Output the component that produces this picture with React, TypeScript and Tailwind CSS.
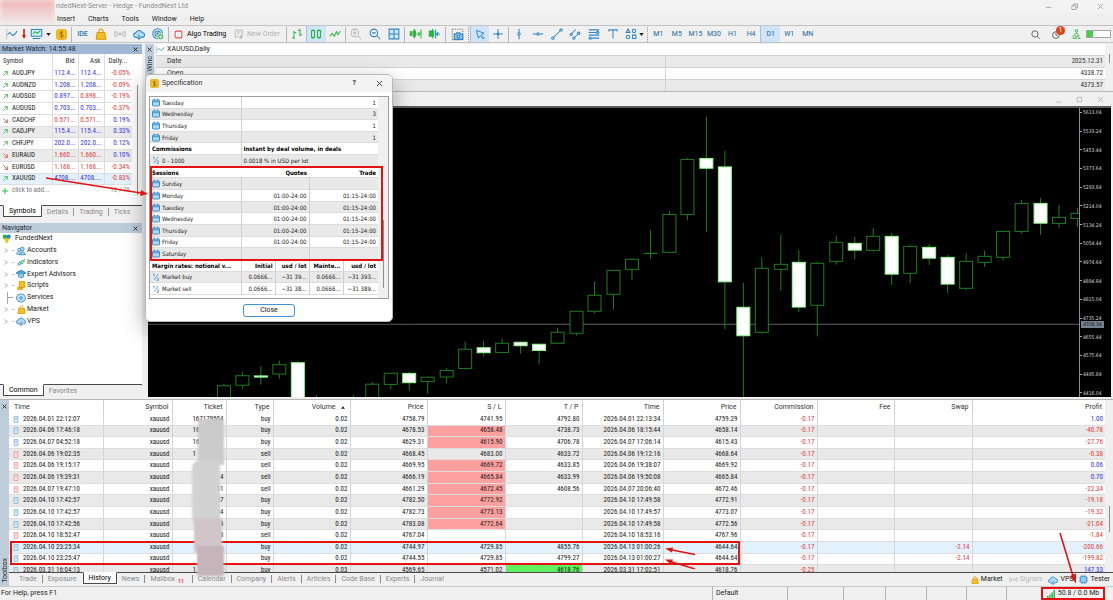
import clsx from "clsx";
import type { ReactNode } from "react";

type Tone = "blue" | "red";

const BLUE = "#2f86c4";
const GREEN = "#2fb344";
const GOLD = "#f5bd1f";

const quotes: {
  symbol: string;
  up: boolean;
  bid: string;
  bidTone: Tone;
  ask: string;
  askTone: Tone;
  daily: string;
  bg?: string;
}[] = [
  { symbol: "AUDJPY", up: true, bid: "112.4...", bidTone: "blue", ask: "112.4...", askTone: "blue", daily: "-0.05%" },
  { symbol: "AUDNZD", up: true, bid: "1.208...", bidTone: "blue", ask: "1.208...", askTone: "blue", daily: "-0.09%" },
  { symbol: "AUDSGD", up: true, bid: "0.897...", bidTone: "blue", ask: "0.898...", askTone: "red", daily: "-0.19%" },
  { symbol: "AUDUSD", up: true, bid: "0.703...", bidTone: "blue", ask: "0.703...", askTone: "blue", daily: "-0.37%" },
  { symbol: "CADCHF", up: false, bid: "0.571...", bidTone: "red", ask: "0.571...", askTone: "red", daily: "0.19%" },
  { symbol: "CADJPY", up: true, bid: "115.4...", bidTone: "blue", ask: "115.4...", askTone: "blue", daily: "0.33%", bg: "bg-[#ebebeb]" },
  { symbol: "CHFJPY", up: true, bid: "202.0...", bidTone: "blue", ask: "202.0...", askTone: "blue", daily: "0.12%" },
  { symbol: "EURAUD", up: false, bid: "1.660...", bidTone: "red", ask: "1.660...", askTone: "red", daily: "0.10%", bg: "bg-[#ebebeb]" },
  { symbol: "EURUSD", up: false, bid: "1.168...", bidTone: "red", ask: "1.168...", askTone: "red", daily: "-0.34%" },
  { symbol: "XAUUSD", up: true, bid: "4708....", bidTone: "blue", ask: "4708....", askTone: "blue", daily: "-0.83%", bg: "bg-[#e3f1fd]" },
];

const history: {
  time: string;
  ticket: string;
  type: string;
  volume: string;
  price: string;
  sl: string;
  slHit?: boolean;
  tp: string;
  tpHit?: boolean;
  closeTime: string;
  closePrice: string;
  commission: string;
  swap?: string;
  profit: string;
  selected?: boolean;
}[] = [
  { time: "2026.04.01 22:12:07", ticket: "167179504", type: "buy", volume: "0.02", price: "4758.79", sl: "4741.95", tp: "4792.80", closeTime: "2026.04.01 22:13:34", closePrice: "4759.29", commission: "-0.17", profit: "1.00" },
  { time: "2026.04.06 17:46:18", ticket: "16", type: "buy", volume: "0.02", price: "4678.53", sl: "4658.48", slHit: true, tp: "4738.73", closeTime: "2026.04.06 18:15:44", closePrice: "4658.14", commission: "-0.17", profit: "-40.78" },
  { time: "2026.04.07 04:52:18", ticket: "16", type: "buy", volume: "0.02", price: "4629.31", sl: "4615.90", slHit: true, tp: "4706.78", closeTime: "2026.04.07 17:06:14", closePrice: "4615.43", commission: "-0.17", profit: "-27.76" },
  { time: "2026.04.06 19:02:35", ticket: "1", type: "sell", volume: "0.02", price: "4668.45", sl: "4683.00", tp: "4633.72", closeTime: "2026.04.06 19:12:16", closePrice: "4668.64", commission: "-0.17", profit: "-0.38" },
  { time: "2026.04.06 19:15:17", ticket: "", type: "sell", volume: "0.02", price: "4669.95", sl: "4669.72", slHit: true, tp: "4633.85", closeTime: "2026.04.06 19:38:07", closePrice: "4669.92", commission: "-0.17", profit: "0.06" },
  { time: "2026.04.06 19:39:31", ticket: "4", type: "sell", volume: "0.02", price: "4666.19", sl: "4665.84", slHit: true, tp: "4633.99", closeTime: "2026.04.06 19:50:08", closePrice: "4665.84", commission: "-0.17", profit: "0.70" },
  { time: "2026.04.07 19:47:10", ticket: "41", type: "sell", volume: "0.02", price: "4661.29", sl: "4672.45", slHit: true, tp: "4608.56", closeTime: "2026.04.07 20:06:40", closePrice: "4672.46", commission: "-0.17", profit: "-22.34" },
  { time: "2026.04.10 17:42:57", ticket: "37", type: "buy", volume: "0.02", price: "4782.50", sl: "4772.92", slHit: true, tp: "", closeTime: "2026.04.10 17:49:58", closePrice: "4772.91", commission: "-0.17", profit: "-19.18" },
  { time: "2026.04.10 17:42:57", ticket: "34", type: "buy", volume: "0.02", price: "4782.73", sl: "4773.13", slHit: true, tp: "", closeTime: "2026.04.10 17:49:57", closePrice: "4773.07", commission: "-0.17", profit: "-19.32" },
  { time: "2026.04.10 17:42:56", ticket: "4", type: "buy", volume: "0.02", price: "4783.08", sl: "4772.64", slHit: true, tp: "", closeTime: "2026.04.10 17:49:58", closePrice: "4772.56", commission: "-0.17", profit: "-21.04" },
  { time: "2026.04.10 18:52:47", ticket: "8", type: "sell", volume: "0.02", price: "4767.04", sl: "", tp: "", closeTime: "2026.04.10 18:53:16", closePrice: "4767.96", commission: "-0.17", profit: "-1.84" },
  { time: "2026.04.10 23:25:34", ticket: "", type: "buy", volume: "0.02", price: "4744.97", sl: "4729.85", tp: "4855.76", closeTime: "2026.04.13 01:00:26", closePrice: "4644.64", commission: "-0.17", swap: "-2.14", profit: "-200.66", selected: true },
  { time: "2026.04.10 23:25:47", ticket: "", type: "buy", volume: "0.02", price: "4744.55", sl: "4729.85", tp: "4799.27", closeTime: "2026.04.13 01:00:27", closePrice: "4644.64", commission: "-0.17", swap: "-2.14", profit: "-199.82" },
  { time: "2026.03.31 16:04:13", ticket: "1", type: "buy", volume: "0.03", price: "4569.65", sl: "4571.02", tp: "4618.76", tpHit: true, closeTime: "2026.03.31 17:02:51", closePrice: "4618.76", commission: "-0.25", profit: "147.33" },
];

// x, high, body top, body bottom, low, bearish
const candles: [number, number, number, number, number, boolean][] = [
  [76, 276, 278, 300, 300, false],
  [94.5, 264, 268, 277.5, 281, false],
  [113, 258.5, 268.2, 269.4, 277, true],
  [131.5, 253, 257, 266.3, 271, false],
  [150, 253, 255, 300, 300, true],
  [168.5, 287, 300, 302, 302, false],
  [205.5, 287, 300, 302, 302, false],
  [224.5, 274.5, 276.5, 300, 300, false],
  [243, 265, 265.5, 276.7, 281.7, false],
  [261.5, 264, 265.7, 275, 282.7, true],
  [280, 269, 269.5, 273.7, 286, false],
  [299, 260, 262.7, 269.3, 275.7, false],
  [317.5, 234, 241.5, 260.7, 262, false],
  [336, 233, 240, 245, 248.7, true],
  [354.5, 231, 235.5, 244.7, 245, false],
  [373, 234, 234.5, 238, 246, true],
  [391.5, 236, 236.5, 242.7, 256.7, true],
  [410, 220, 224.5, 235.5, 236, false],
  [429, 203, 203.5, 225.5, 227.7, false],
  [447, 174, 187.5, 203.5, 205.7, false],
  [466, 162, 162.5, 186.5, 201.7, false],
  [484.5, 150.7, 151.5, 161.5, 172, false],
  [503, 122, 145.4, 145.6, 150.7, false],
  [522, 103.3, 106.5, 144.5, 145.5, false],
  [540, 50, 51.5, 106.5, 112, false],
  [559, 8.7, 50.5, 60.3, 124, true],
  [577.5, 43, 59, 174, 221.3, true],
  [596, 175, 199.5, 228, 289, true],
  [614.5, 149.3, 160.5, 224.5, 226.3, false],
  [633.5, 126.7, 156.5, 161.5, 182.7, false],
  [651.5, 142.3, 154.5, 199.3, 204.3, true],
  [670, 154, 155.5, 197.5, 228.7, false],
  [689, 128, 134.5, 153.5, 156.7, false],
  [707.5, 129, 135.5, 142.3, 151.7, true],
  [726, 120, 128.5, 142.5, 144, false],
  [744.5, 125, 128.5, 166.3, 177, true],
  [763, 137, 138.5, 165.5, 175.3, false],
  [782, 136.3, 139.5, 150.3, 157, true],
  [800.5, 147.3, 149.5, 176.3, 185.3, true],
  [819, 145.3, 153.5, 180.5, 182.5, false],
  [837.5, 143, 148.5, 154.5, 159, false],
  [856, 123, 123.5, 149.5, 153, false],
  [874.5, 92, 95.5, 123.5, 125.7, false],
  [893.5, 90, 95.5, 115.3, 127, true],
  [912, 97, 109.5, 115.5, 120, false],
  [930.5, 99.7, 105.5, 110.5, 119, false],
];

const scale = Array.from({ length: 16 }, (_, i) => (5613.04 - i * 79.8).toFixed(2));

const Icon = ({
  children,
  className,
  color = BLUE,
}: {
  children: ReactNode;
  className?: string;
  color?: string;
}) => (
  <svg
    viewBox="0 0 16 16"
    className={clsx("shrink-0", className || "w-3 h-3")}
    fill="none"
    stroke={color}
    strokeWidth="1.4"
    aria-hidden="true"
  >
    {children}
  </svg>
);

const LineChartIcon = ({ className }: { className?: string }) => (
  <Icon className={className}>
    <path d="M1 15V1" stroke="#c4c4c4" />
    <path d="M2 9l3-3 4 4 3-2 3-4" />
  </Icon>
);

const BagIcon = ({ className }: { className?: string }) => (
  <Icon className={className} color="#d99a00">
    <path d="M5.3 6V4a2.7 2.7 0 0 1 5.4 0v2" />
    <path d="M3 6h10l1.3 9H1.7z" fill={GOLD} />
  </Icon>
);

const CloudIcon = ({ className }: { className?: string }) => (
  <Icon className={className}>
    <path
      d="M4 12.5a3 3 0 0 1-.2-6A4.3 4.3 0 0 1 12 6a3.2 3.2 0 0 1 .2 6.5h-2.4M6.3 12.5H4"
      fill="#b5dcf7"
    />
    <path d="M8 9v6M6 13l2 2 2-2" />
  </Icon>
);

const SignalIcon = ({ className }: { className?: string }) => (
  <Icon className={className} color="#b9b9b9">
    <circle cx="8" cy="8" r="1.3" />
    <path d="M5 5.3a4 4 0 0 0 0 5.4M11 5.3a4 4 0 0 1 0 5.4M2.6 3.6a7 7 0 0 0 0 8.8M13.4 3.6a7 7 0 0 1 0 8.8" />
  </Icon>
);

const CoinIcon = ({ className }: { className?: string }) => (
  <Icon className={className} color="#c98f00">
    <rect x="1" y="1" width="14" height="14" rx="2.5" fill={GOLD} stroke="#e5a900" />
    <path d="M10.5 5.2C9.5 4.2 5.6 4 5.6 6.2c0 2.3 5 1.3 5 3.6 0 2.2-4 2-5.2.9M8 3v10" stroke="#8a6200" strokeWidth="1.2" />
  </Icon>
);

const CalendarIcon = () => (
  <Icon className="w-[8px] h-[9px]">
    <rect x="1" y="3" width="14" height="12" rx="1" fill="#a9dcf9" strokeWidth="1.8" />
    <path d="M1 6.5h14M4.5 0v4M11.5 0v4" strokeWidth="1.8" />
  </Icon>
);

const HalfIcon = () => (
  <Icon className="w-[8px] h-[8px]">
    <path d="M2 3l2-1.5V7M4 14L12 2M9.5 10.5c1-2 4-1.3 4 .3 0 1.5-2.5 1.7-4 3.7h4.5" />
  </Icon>
);

const Caret = () => (
  <svg viewBox="0 0 6 4" className="w-[5px] h-[3px]" fill="#222" aria-hidden="true">
    <path d="M0 0h6L3 4z" />
  </svg>
);

const CloseX = () => (
  <svg viewBox="0 0 8 8" className="w-[5px] h-[5px]" stroke="#222" strokeWidth="1.5" aria-hidden="true">
    <path d="M1 1l6 6M7 1L1 7" />
  </svg>
);

const Sep = ({ dotted }: { dotted?: boolean }) => (
  <div className={clsx("h-[15px] mx-px border-l", dotted ? "border-dotted border-[#999]" : "border-[#b5b5b5]")} />
);

const Tool = ({
  label,
  active,
  children,
  className,
}: {
  label: string;
  active?: boolean;
  children: ReactNode;
  className?: string;
}) => (
  <button
    type="button"
    aria-label={label}
    className={clsx(
      "h-[16px] flex items-center justify-center",
      className || "flex-1",
      active && "bg-[#cfe4f7] border-l border-[#a9bfd3]",
    )}
  >
    {children}
  </button>
);

const Toolbar = () => (
  <div className="h-[18px] flex items-center pl-1 pr-[2px] border-y border-[#c3c3c3] bg-[#f0f0f0]">
    <Tool label="New chart" className="w-6 gap-1">
      <LineChartIcon />
      <svg viewBox="0 0 4 10" className="w-1 h-[10px]" fill="#e01515" aria-hidden="true">
        <path d="M1.2 0h1.6v6H4L2 10 0 6h1.2z" />
      </svg>
    </Tool>
    <Tool label="Profiles" className="w-6 gap-[3px]">
      <Icon className="w-[13px] h-[12px]">
        <path d="M1 2h14v9H1zM3 14h10" fill="#d6ecfa" />
        <path d="M3 8l3-3 3 2 4-3" stroke={GREEN} />
      </Icon>
      <Caret />
    </Tool>
    <Tool label="Market watch" className="w-[18px]">
      <CoinIcon className="w-[11px] h-[11px]" />
    </Tool>
    <Sep />
    <div className="w-[94px] flex">
      <Tool label="MetaEditor">
        <span className="font-semibold text-[#2f7fbd]">IDE</span>
      </Tool>
      <Tool label="Market">
        <BagIcon />
      </Tool>
      <Tool label="Signals">
        <SignalIcon />
      </Tool>
      <Tool label="VPS">
        <CloudIcon />
      </Tool>
      <Tool label="Copy">
        <Icon>
          <circle cx="7.5" cy="7.5" r="6.5" />
          <circle cx="7.5" cy="7.5" r="3.6" />
          <circle cx="7.5" cy="7.5" r="1" />
          <circle cx="11.5" cy="11.5" r="4" fill={GREEN} stroke="#fff" strokeWidth="1" />
          <path d="M11.5 9.5v4M9.5 11.5h4" stroke="#fff" />
        </Icon>
      </Tool>
    </div>
    <Sep />
    <button type="button" className="w-[59px] flex items-center gap-1 pl-1">
      <Icon className="w-[9px] h-[9px]" color="#e0524e">
        <rect x="2" y="2" width="12" height="12" rx="2" strokeWidth="1.8" />
      </Icon>
      Algo Trading
    </button>
    <button type="button" className="w-[56px] flex items-center gap-[3px] pl-[5px] text-[#b2b2b2]">
      <Icon className="w-[10px] h-[11px]" color="#b5b5b5">
        <path d="M2 1h11v9M2 1v11h5M5 4h5M5 7h3" />
        <path d="M11 9v6M8 12h6" strokeWidth="2" />
      </Icon>
      New Order
    </button>
    <Sep />
    <div className="w-[56px] flex">
      <Tool label="Bar chart">
        <Icon color={GREEN}>
          <path d="M4 4v11M1.5 13H4M4 6h3M12 1v10M9 3h3M12 9h3" />
        </Icon>
      </Tool>
      <Tool label="Candlesticks" active>
        <Icon color={GREEN}>
          <path d="M2 3.5h4v9H2zM4 1.5v2M4 12.5v2M10 3.5h4v9h-4zM12 1.5v2M12 12.5v2" />
        </Icon>
      </Tool>
      <Tool label="Line chart">
        <Icon color={GREEN}>
          <path d="M1 11l3-4 3 4 3-6 2 4 3-5" />
        </Icon>
      </Tool>
    </div>
    <Sep />
    <div className="w-[56px] flex">
      <Tool label="Zoom in">
        <Icon color="#bdbdbd">
          <circle cx="6.5" cy="6.5" r="5" />
          <path d="M10 10l5 5M4 6.5h5M6.5 4v5" />
        </Icon>
      </Tool>
      <Tool label="Zoom out">
        <Icon>
          <circle cx="6.5" cy="6.5" r="5" />
          <path d="M10 10l5 5M4 6.5h5" />
        </Icon>
      </Tool>
      <Tool label="Tile windows">
        <Icon>
          <path d="M1.5 1.5h13v13h-13z" fill="#cfe8f9" />
          <path d="M8 1.5v13M1.5 8h13" />
        </Icon>
      </Tool>
    </div>
    <Sep />
    <div className="w-[38px] flex">
      <Tool label="Auto scroll">
        <Icon className="w-[13px] h-[12px]" color={GREEN}>
          <path d="M1 5h2v5H1zM5 4h3v7H5z" fill={GREEN} />
          <path d="M6.5 1v13M9 8h4M11.5 5.5L14 8l-2.5 2.5M15.3 2v12" />
        </Icon>
      </Tool>
      <Tool label="Chart shift">
        <Icon className="w-[13px] h-[12px]" color={GREEN}>
          <path d="M1 4h2v7H1zM4 4h3v7H4z" fill={GREEN} />
          <path d="M5.5 1v13" />
          <path d="M9.5 2v12M15 8h-4M13 5.5L10.5 8l2.5 2.5" stroke={BLUE} />
        </Icon>
      </Tool>
    </div>
    <Sep />
    <Tool label="Screenshot" className="w-5">
      <Icon className="w-[13px] h-[13px]">
        <path d="M1.5 1.5h13v13h-13z" stroke="#555" strokeDasharray="1.5 1.5" strokeWidth="1" />
        <path d="M4 7.5h2l1-1.5h4l1 1.5h2.5V14H4z" fill="#8cc8ee" />
        <circle cx="9.2" cy="10.5" r="1.7" fill="#fff" />
      </Icon>
    </Tool>
    <Sep dotted />
    <div className="w-[37px] flex">
      <Tool label="Cursor" active>
        <Icon className="w-[11px] h-[11px]">
          <path d="M2 2l11 4-4 2.5 4.5 4.5-1.5 1.5L7.5 10 5 13.5z" />
        </Icon>
      </Tool>
      <Tool label="Crosshair">
        <Icon>
          <path d="M8 1.5v13M1.5 8h13" />
          <circle cx="8" cy="8" r="1.2" fill="#f0f0f0" />
        </Icon>
      </Tool>
    </div>
    <Sep />
    <div className="w-[112px] flex">
      <Tool label="Vertical line">
        <Icon>
          <path d="M8 1v14" />
          <circle cx="8" cy="8" r="1.6" fill="#f0f0f0" />
        </Icon>
      </Tool>
      <Tool label="Horizontal line">
        <Icon>
          <path d="M1 8h14" />
          <circle cx="8" cy="8" r="1.6" fill="#f0f0f0" />
        </Icon>
      </Tool>
      <Tool label="Trendline">
        <Icon>
          <path d="M3 13L13 3" />
          <circle cx="2.5" cy="13.5" r="1.6" fill="#f0f0f0" />
          <circle cx="13.5" cy="2.5" r="1.6" fill="#f0f0f0" />
        </Icon>
      </Tool>
      <Tool label="Channel">
        <Icon>
          <path d="M2 9l7-7M6 14l8-8" />
          <circle cx="3" cy="8.5" r="1.5" fill="#f0f0f0" />
          <circle cx="6.5" cy="13.5" r="1.5" fill="#f0f0f0" />
          <circle cx="13" cy="7" r="1.5" fill="#f0f0f0" />
        </Icon>
      </Tool>
      <Tool label="Fibonacci">
        <Icon>
          <path d="M1 2.5h14M1 6h14M1 9.5h14M1 13.5h14" />
          <circle cx="13" cy="6" r="1.5" fill="#f0f0f0" />
          <circle cx="3" cy="13.5" r="1.5" fill="#f0f0f0" />
        </Icon>
      </Tool>
      <Tool label="Text">
        <Icon>
          <path d="M2.5 4.5V2.5h11v2M8 2.5V14" />
        </Icon>
      </Tool>
    </div>
    <Tool label="Shapes" className="w-6 gap-[2px]">
      <Icon>
        <path d="M4 1.5L6.5 6H1.5z" />
        <circle cx="12" cy="4" r="2.3" />
        <circle cx="4" cy="12" r="2.3" />
        <path d="M10 9.5h4.5V14H10z" />
      </Icon>
      <Caret />
    </Tool>
    <Sep dotted />
    <div className="w-[168px] flex text-[#22679c]">
      {["M1", "M5", "M15", "M30", "H1", "H4", "D1", "W1", "MN"].map((frame) => (
        <Tool key={frame} label={frame} active={frame === "D1"}>
          {frame}
        </Tool>
      ))}
    </div>
    <div className="ml-auto flex items-center">
      <Tool label="Search" className="w-[19px]">
        <Icon className="w-[9px] h-[9px]" color="#444">
          <circle cx="7" cy="7" r="5.5" />
          <path d="M11 11l4.5 4.5" />
        </Icon>
      </Tool>
      <Tool label="Notifications" className="w-[22px] relative">
        <Icon className="w-[9px] h-[9px]" color="#444">
          <circle cx="7" cy="9" r="6" />
          <path d="M7 5v4l3 2" />
        </Icon>
        <span className="absolute right-[2px] top-0 w-[9px] h-[9px] rounded-full bg-[#e2401c] text-white text-center">
          1
        </span>
      </Tool>
      <Tool label="Level" className="w-[19px] flex-col">
        <Icon className="w-[7px] h-[6px]" color={GREEN}>
          <circle cx="8" cy="5" r="3.5" strokeWidth="2.5" />
          <path d="M2 15l6-4 6 4" strokeWidth="2.5" />
        </Icon>
        <span className="text-[5px] leading-[5px] font-bold text-[#2fb344]">LVL</span>
      </Tool>
      <div className="w-[25px] h-2 border border-[#a5a5a5] bg-white">
        <div className="w-[6px] h-full bg-[#41d641]" />
      </div>
    </div>
  </div>
);

const Tabs = ({ items, active }: { items: string[]; active: string }) => (
  <div className="h-[13px] flex items-start pl-[3px] text-[#8a8a8a] bg-[#f0f0f0] border-t border-[#4a4a4a]">
    {items.map((item, i) => (
      <button
        type="button"
        key={item}
        className={clsx(
          "h-3 flex items-center px-[5px]",
          item === active && "-mt-px bg-white text-black border border-t-white border-[#4a4a4a]",
        )}
      >
        {item}
        {item !== active && i < items.length - 1 && (
          <span className="h-2 border-l border-[#9a9a9a] ml-[5px] -mr-[5px]" />
        )}
      </button>
    ))}
  </div>
);

const MarketWatch = () => (
  <section className="h-[174px] flex flex-col">
    <header className="h-[10px] flex items-center justify-between pl-[2px] pr-1 bg-[#9fb7d3] text-[#1d2733]">
      <h2>Market Watch: 14:55:48</h2>
      <button type="button" aria-label="Close Market Watch">
        <CloseX />
      </button>
    </header>
    <div className="flex-1 flex bg-white overflow-hidden">
      <div className="flex-1">
        <table className="w-full h-[142px] table-fixed border-collapse font-['Roboto_Condensed','Liberation_Sans_Narrow','Open_Sans',sans-serif]">
          <thead>
            <tr className="h-[14px] text-[#333]">
              <th className="w-[52px] pl-[3px] text-left font-normal">Symbol</th>
              <th className="w-[26px] pr-[3px] text-right font-normal border-l border-[#dcdcdc]">Bid</th>
              <th className="w-[26px] pr-[3px] text-right font-normal border-l border-[#dcdcdc]">Ask</th>
              <th className="pl-1 text-left font-normal border-l border-[#dcdcdc]">Daily...</th>
            </tr>
          </thead>
          <tbody>
            {quotes.map((q) => (
              <tr key={q.symbol} className={clsx("border-b border-[#dedede]", q.bg)}>
                <td className="pl-[3px] text-[#222]">
                  <div className="flex items-center gap-1">
                    <Icon className="w-[5px] h-[5px]" color={q.up ? "#2fb344" : "#e0413c"}>
                      <path
                        d={q.up ? "M1 15L14 2M4 2h10v10" : "M1 1l13 13M14 4v10H4"}
                        strokeWidth="2.5"
                      />
                    </Icon>
                    {q.symbol}
                  </div>
                </td>
                <td className={clsx("pr-[2px] text-right border-l border-[#dcdcdc]", q.bidTone === "blue" ? "text-[#3333e6]" : "text-[#e23a3a]")}>
                  {q.bid}
                </td>
                <td className={clsx("pr-[2px] text-right border-l border-[#dcdcdc]", q.askTone === "blue" ? "text-[#3333e6]" : "text-[#e23a3a]")}>
                  {q.ask}
                </td>
                <td className={clsx("pr-[2px] text-right border-l border-[#dcdcdc]", q.daily.startsWith("-") ? "text-[#e23a3a]" : "text-[#3333e6]")}>
                  {q.daily}
                </td>
              </tr>
            ))}
            <tr className="text-[#777]">
              <td colSpan={3} className="pl-[2px]">
                <div className="flex items-center gap-1">
                  <Icon className="w-[6px] h-[6px]" color={GREEN}>
                    <path d="M8 0v16M0 8h16" strokeWidth="2.5" />
                  </Icon>
                  click to add...
                </div>
              </td>
              <td className="pr-[2px] text-right text-[#999]">12 / 76</td>
            </tr>
          </tbody>
        </table>
      </div>
      <div className="w-[10px] pt-[31px] flex justify-center">
        <div className="w-px h-[110px] bg-[#8d8d8d]" />
      </div>
    </div>
    <Tabs items={["Symbols", "Details", "Trading", "Ticks"]} active="Symbols" />
  </section>
);

const navItems: { label: string; icon: ReactNode; leaf?: boolean }[] = [
  {
    label: "Accounts",
    icon: (
      <Icon className="w-[10px] h-[10px]">
        <circle cx="10" cy="5" r="3" fill="#b5dcf7" />
        <path d="M5 14c0-6 10-6 10 0z" fill="#b5dcf7" />
        <circle cx="5" cy="6" r="2.3" fill="#e4f3fd" />
        <path d="M1 13c0-5 7-5 7 0z" fill="#e4f3fd" />
      </Icon>
    ),
  },
  {
    label: "Indicators",
    icon: (
      <Icon className="w-[9px] h-[9px]">
        <path d="M1 14l4-8 4 5 5-9" stroke={GREEN} />
        <path d="M1 9l4 4 4-9 5 2" />
      </Icon>
    ),
  },
  {
    label: "Expert Advisors",
    icon: (
      <Icon className="w-[10px] h-[10px]">
        <path d="M0 6l8-4 8 4-8 4z" fill="#4fa3dc" />
        <path d="M4 8.5v4c2 2 6 2 8 0v-4" fill="#9bd0f2" />
      </Icon>
    ),
  },
  {
    label: "Scripts",
    icon: (
      <Icon className="w-[9px] h-[9px]" color="#d99a00">
        <path d="M4 1h10v11H4zM1 11h9v4H1z" fill={GOLD} />
      </Icon>
    ),
  },
  {
    label: "Services",
    leaf: true,
    icon: (
      <Icon className="w-[10px] h-[10px]">
        <path
          d="M8 1l2 1.5 2.500-.3.7 2.400 2.100 1.400L14.500 8l.8 2-2.100 1.400-.7 2.400-2.500-.3L8 15l-2-1.500-2.500.3-.7-2.400L.7 10l.8-2-.8-2 2.100-1.400.7-2.400 2.500.3z"
          fill="#cfe8f9"
        />
        <circle cx="8" cy="8" r="2.200" />
      </Icon>
    ),
  },
  { label: "Market", icon: <BagIcon className="w-[9px] h-[9px]" /> },
  { label: "VPS", icon: <CloudIcon className="w-[10px] h-[10px]" /> },
];

const Navigator = () => (
  <section className="flex-1 flex flex-col">
    <header className="h-[10px] flex items-center justify-between pl-[2px] pr-1 bg-[#bfcddb] text-[#1d2733]">
      <h2>Navigator</h2>
      <button type="button" aria-label="Close Navigator">
        <CloseX />
      </button>
    </header>
    <div className="flex-1 bg-white">
      <ul className="h-[94px] flex flex-col text-[#222]">
        <li className="flex-1 flex items-center gap-1 pl-[2px]">
          <svg viewBox="0 0 16 16" className="w-[9px] h-[9px]" aria-hidden="true">
            <circle cx="5" cy="5" r="4" fill="#2bb24c" />
            <circle cx="11.5" cy="5" r="4" fill="#2f86c4" />
            <path d="M4 8h9l-3 8H7z" fill="#f2c21a" />
          </svg>
          FundedNext
        </li>
        {navItems.map((item) => (
          <li key={item.label} className="flex-1 flex items-center pl-1">
            {item.leaf ? (
              <span className="w-[8px] h-full flex items-center border-l border-[#a8a8a8] ml-[3px]">
                <span className="w-[5px] border-t border-[#a8a8a8]" />
              </span>
            ) : (
              <svg viewBox="0 0 22 10" className="w-[11px] h-[5px]" fill="none" stroke="#777" strokeWidth="1.6" aria-hidden="true">
                <path d="M2 1l4 4-4 4" />
                <path d="M15 5h6" stroke="#b8b8b8" />
              </svg>
            )}
            <span className="w-[12px] flex justify-center">{item.icon}</span>
            {item.label}
          </li>
        ))}
      </ul>
    </div>
    <Tabs items={["Common", "Favorites"]} active="Common" />
  </section>
);

const DataWindow = () => (
  <div className="h-[49px] flex bg-[#f0f0f0] border-b border-[#b5b5b5]">
    <div className="w-[9px] flex flex-col items-center pt-[3px] gap-[4px] bg-[#bfcddb]">
      <CloseX />
      <span className="[writing-mode:vertical-rl] rotate-180 text-[#333] leading-[8px]">Data Winc</span>
    </div>
    <div className="flex-1 flex flex-col pl-[2px]">
      <div className="h-[11px] flex items-center gap-[2px] bg-white text-[#222]">
        <LineChartIcon className="w-[9px] h-[9px]" />
        XAUUSD,Daily
      </div>
      {[
        ["Date", "2025.12.31"],
        ["Open", "4338.72"],
        ["", "4373.57"],
      ].map(([name, value], i) => (
        <div
          key={value}
          className={clsx(
            "h-3 flex items-center justify-between pl-[11px] pr-[2px] border-t border-[#d2d2d2] text-[#333]",
            i % 2 ? "bg-white" : "bg-[#e9e9e9]",
          )}
        >
          <span className="w-[499px] h-full flex items-center border-r border-[#d2d2d2]">{name}</span>
          <span className="font-['Roboto_Condensed','Liberation_Sans_Narrow','Open_Sans',sans-serif]">{value}</span>
        </div>
      ))}
    </div>
    <div className="w-[8px] pt-[10px] flex justify-center">
      <div className="w-px h-[9px] bg-[#8d8d8d]" />
    </div>
  </div>
);

const Chart = () => (
  <div className="flex-1 flex ml-[3px] mr-[2px] bg-black border-t-2 border-[#5c5c5c]">
    <svg
      viewBox="0 0 932 289"
      preserveAspectRatio="none"
      className="flex-1 min-w-0 h-full border-r border-[#8c8c8c]"
      role="img"
      aria-label="XAUUSD daily candles"
    >
      <path d="M0 216.5h932" stroke="#5b646c" />
      {candles.map(([x, high, top, bottom, low, bearish]) => (
        <g key={x} stroke="#1f7d1f">
          <path d={`M${x} ${high}V${top}M${x} ${bottom}V${low}`} />
          <rect
            x={x - 6.5}
            y={top}
            width="13"
            height={Math.max(bottom - top, 0.2)}
            fill={bearish ? "#fff" : "#000"}
            stroke={bearish ? "#8dff8d" : "#1f7d1f"}
          />
        </g>
      ))}
    </svg>
    <div className="w-[31px] relative flex flex-col justify-between font-['DejaVu_Sans_Condensed','DejaVu_Sans',sans-serif] text-[5px] leading-[8px] text-[#d8d8d8]">
      {scale.map((price) => (
        <div key={price} className="flex items-center">
          <span className="w-[2px] border-t border-[#aaa] mr-px" />
          {price}
        </div>
      ))}
      <span className="absolute left-[1px] top-[213px] w-[23px] h-[7px] leading-[7px] text-center bg-[#77838f] text-[#101010]">
        4708.34
      </span>
    </div>
  </div>
);

type SpecRow = { icon?: ReactNode; cells: string[]; bold?: boolean };

const day = (name: string, ...cells: string[]): SpecRow => ({ icon: <CalendarIcon />, cells: [name, ...cells] });

const specRows: SpecRow[] = [
  day("Tuesday", "1"),
  day("Wednesday", "3"),
  day("Thursday", "1"),
  day("Friday", "1"),
  { cells: ["Commissions", "Instant by deal volume, in deals"], bold: true },
  { icon: <HalfIcon />, cells: ["0 - 1000", "0.0018 % in USD per lot"] },
  { cells: ["Sessions", "Quotes", "Trade"], bold: true },
  day("Sunday", "", ""),
  day("Monday", "01:00-24:00", "01:15-24:00"),
  day("Tuesday", "01:00-24:00", "01:15-24:00"),
  day("Wednesday", "01:00-24:00", "01:15-24:00"),
  day("Thursday", "01:00-24:00", "01:15-24:00"),
  day("Friday", "01:00-24:00", "01:15-24:00"),
  day("Saturday", "", ""),
  { cells: ["Margin rates: notional v...", "Initial", "usd / lot", "Mainte...", "usd / lot"], bold: true },
  { icon: <HalfIcon />, cells: ["Market buy", "0.0666...", "~31 39...", "0.0666...", "~31 393..."] },
  { icon: <HalfIcon />, cells: ["Market sell", "0.0666...", "~31 38...", "0.0666...", "~31 389..."] },
];

const Specification = () => (
  <div
    role="dialog"
    aria-label="Specification"
    className="absolute left-[145px] top-[74px] w-[248px] h-[248px] flex flex-col bg-white rounded-[5px] border border-[#b9b9b9] shadow-[0_8px_22px_rgba(0,0,0,0.35)]"
  >
    <header className="h-[17px] flex items-center pl-1 pr-[9px] rounded-t-[4px] bg-[#f3f3f3] text-[#333]">
      <CoinIcon className="w-[9px] h-[9px]" />
      <h2 className="ml-[3px]">Specification</h2>
      <button type="button" aria-label="Help" className="ml-auto mr-[20px] font-bold">
        ?
      </button>
      <button type="button" aria-label="Close dialog">
        <svg viewBox="0 0 8 8" className="w-[7px] h-[7px]" stroke="#333" aria-hidden="true">
          <path d="M1 1l6 6M7 1L1 7" />
        </svg>
      </button>
    </header>
    <div className="relative mt-[4px] mx-[3px] h-[203px] flex border border-[#9d9d9d]">
      <table className="flex-1 h-[198px] table-fixed border-collapse font-['DejaVu_Sans_Condensed','DejaVu_Sans',sans-serif] text-[6px] text-[#222]">
        <colgroup>
          <col className="w-[91px]" />
          <col className="w-[34px]" />
          <col className="w-[34px]" />
          <col className="w-[34px]" />
          <col />
        </colgroup>
        <tbody>
          {specRows.map((row, i) => {
            const values = row.cells.length - 1;
            return (
              <tr key={i} className={clsx("border-b border-[#dcdcdc]", i % 2 && "bg-[#e9e9e9]", row.bold && "font-bold text-black")}>
                {row.cells.map((cell, c) => (
                  <td
                    key={c}
                    colSpan={c === 0 ? 1 : 4 / values}
                    className={clsx(
                      "whitespace-nowrap",
                      c === 0 ? "pl-[2px]" : "px-[2px]",
                      c > 0 && values !== 2 && "border-l border-[#d0d0d0]",
                      c > 0 && values === 2 && !row.bold && "border-l border-[#d0d0d0]",
                      c > 0 && (i === 4 || i === 5 ? "text-left" : "text-right"),
                    )}
                  >
                    {c === 0 ? (
                      <div className="flex items-center gap-[2px]">
                        {row.icon}
                        {cell}
                      </div>
                    ) : (
                      cell
                    )}
                  </td>
                ))}
              </tr>
            );
          })}
        </tbody>
      </table>
      <div className="w-[10px] flex justify-center pt-[123px] bg-[#f0f0f0]">
        <div className="w-px h-[68px] bg-[#8d8d8d]" />
      </div>
      <div className="absolute left-0 top-[69px] w-[233px] h-[95px] border-2 border-[#e31313]" />
    </div>
    <div className="flex-1 flex items-center justify-center">
      <button
        type="button"
        className="w-[52px] h-[13px] rounded-[3px] border border-[#3f93d4] bg-[#fdfdfd] text-[#222]"
      >
        Close
      </button>
    </div>
  </div>
);

const columns = ["Symbol", "Ticket", "Type", "Volume", "Price", "S / L", "T / P", "Time", "Price", "Commission", "Fee", "Swap", "Profit"];

const tabs = ["Trade", "Exposure", "History", "News", "Mailbox", "Calendar", "Company", "Alerts", "Articles", "Code Base", "Experts", "Journal"];

const Toolbox = () => (
  <section className="relative h-[187px] flex border-t border-[#b5b5b5]">
    <div className="w-[9px] flex flex-col items-center justify-between pt-1 pb-[3px] bg-[#bfcddb]">
      <CloseX />
      <span className="[writing-mode:vertical-rl] rotate-180 leading-[8px] text-[#222]">Toolbox</span>
    </div>
    <div className="flex-1 min-w-0 flex flex-col">
      <div className="relative h-[172px] flex bg-white overflow-hidden">
        <table className="flex-1 h-[177px] table-fixed border-collapse font-['Roboto_Condensed','Liberation_Sans_Narrow','Open_Sans',sans-serif]">
          <colgroup>
            <col className="w-[94px]" />
            <col className="w-[69px]" />
            <col className="w-[54px]" />
            <col className="w-[47px]" />
            <col className="w-[77px]" />
            <col className="w-[77px]" />
            <col className="w-[78px]" />
            <col className="w-[77px]" />
            <col className="w-[81px]" />
            <col className="w-[77px]" />
            <col className="w-[77px]" />
            <col className="w-[77px]" />
            <col className="w-[78px]" />
            <col />
          </colgroup>
          <thead>
            <tr className="h-[14px] text-[#333] font-['Roboto',sans-serif]">
              <th className="pl-[5px] text-left font-normal">Time</th>
              {columns.map((name, i) => (
                <th key={i} className="pr-[3px] text-right font-normal border-l border-[#d0d0d0]">
                  {name === "Volume" ? (
                    <span className="inline-flex items-center gap-[5px] pr-[2px]">
                      Volume
                      <svg viewBox="0 0 6 4" className="w-1 h-[3px]" fill="#222" aria-hidden="true">
                        <path d="M0 4h6L3 0z" />
                      </svg>
                    </span>
                  ) : (
                    name
                  )}
                </th>
              ))}
            </tr>
          </thead>
          <tbody>
            {history.map((row, i) => {
              const cell = "pr-[2px] text-right border-l border-[#d6d6d6]";
              return (
                <tr
                  key={i}
                  className={clsx(
                    "border-b border-[#dedede] text-[#222]",
                    row.selected ? "bg-[#e3f1fd]" : i % 2 ? "bg-[#e9e9e9]" : "bg-white",
                  )}
                >
                  <td className="pl-1">
                    <div className="flex items-center gap-[4px]">
                      <Icon className="w-[6px] h-[9px]" color={row.type === "buy" ? "#3b8cc9" : "#e4605d"}>
                        <path d="M3 .5h10v15H3zM6 5h4M6 9h4" strokeWidth="1.6" fill="#fff" />
                      </Icon>
                      {row.time}
                    </div>
                  </td>
                  <td className={cell}>xauusd</td>
                  <td
                    className={
                      row.ticket.startsWith("1") && row.ticket.length < 3
                        ? "pl-[20px] text-left border-l border-[#d6d6d6]"
                        : cell
                    }
                  >
                    {row.ticket}
                  </td>
                  <td className={cell}>{row.type}</td>
                  <td className={cell}>{row.volume}</td>
                  <td className={cell}>{row.price}</td>
                  <td className={clsx(cell, row.slHit && "bg-[#ffa0a0]")}>{row.sl}</td>
                  <td className={clsx(cell, row.tpHit && "bg-[#5ef05e]")}>{row.tp}</td>
                  <td className={cell}>{row.closeTime}</td>
                  <td className={cell}>{row.closePrice}</td>
                  <td className={clsx(cell, "text-[#e23a3a]")}>{row.commission}</td>
                  <td className={cell} />
                  <td className={clsx(cell, "text-[#e23a3a]")}>{row.swap}</td>
                  <td className={clsx(cell, row.profit.startsWith("-") ? "text-[#e23a3a]" : "text-[#3333e6]")}>
                    {row.profit}
                  </td>
                </tr>
              );
            })}
          </tbody>
        </table>
        <div className="w-[8px] flex justify-center pt-[106px] bg-[#f0f0f0]">
          <div className="w-px h-[26px] bg-[#8d8d8d]" />
        </div>
        <div className="absolute left-[1px] top-[141px] w-[730px] h-[24px] border-2 border-[#e31313]" />
        <svg viewBox="0 0 32 24" className="absolute left-[655px] top-[145px] w-8 h-6" aria-hidden="true">
          <g stroke="#e31313" strokeWidth="1.4" fill="#e31313">
            <path d="M31 9.5L8 5" />
            <path d="M1 3.5l8-1-1 5z" stroke="none" />
            <path d="M31 24L8 17" />
            <path d="M1 14.5l8 0-2 5z" stroke="none" />
          </g>
        </svg>
      </div>
      <div className="h-[14px] flex items-start pl-[5px] pr-[3px] border-t border-[#4a4a4a] bg-[#f0f0f0] text-[#8a8a8a]">
        {tabs.map((tab, i) => (
          <button
            type="button"
            key={tab}
            className={clsx(
              "h-3 flex items-center px-[5px]",
              tab === "History" && "-mt-px bg-white text-black border border-t-white border-[#4a4a4a]",
            )}
          >
            {tab}
            {tab === "Mailbox" && (
              <span className="text-[5px] leading-[5px] mt-[5px] ml-[3px] mr-[3px] font-bold text-[#e23a3a]">11</span>
            )}
            {tab !== "History" && i < tabs.length - 1 && (
              <span className={clsx("h-2 ml-[5px] -mr-[5px] border-l", tab === "Exposure" ? "border-transparent" : "border-[#8a8a8a]")} />
            )}
          </button>
        ))}
        <div className="ml-auto h-[13px] flex items-center gap-[6px] text-[#222]">
          <span className="flex items-center gap-[2px]">
            <BagIcon className="w-2 h-2" />
            Market
          </span>
          <span className="flex items-center gap-[2px] text-[#b9b9b9]">
            <SignalIcon className="w-[9px] h-[9px]" />
            Signals
          </span>
          <span className="flex items-center gap-[2px]">
            <CloudIcon className="w-[10px] h-[10px]" />
            VPS
          </span>
          <span className="flex items-center gap-[2px]">
            <Icon className="w-[9px] h-[9px]">
              <rect x="2.5" y="2.5" width="11" height="11" rx="1.5" fill="#8ccdf3" />
              <path d="M5.5 0v2.5M10.5 0v2.5M5.5 13.5V16M10.5 13.5V16M0 5.5h2.5M0 10.5h2.5M13.5 5.5H16M13.5 10.5H16" />
            </Icon>
            Tester
          </span>
        </div>
      </div>
    </div>
    {/* smudge over the ticket numbers */}
    <div className="absolute left-[198px] top-[19px] w-[26px] h-[46px] bg-[#cbcbcb] blur-[1px]" />
    <div className="absolute left-[192px] top-[60px] w-[28px] h-[64px] bg-[#d2d2d2] blur-[1px] rounded-l-lg" />
    <div className="absolute left-[194px] top-[118px] w-[28px] h-[34px] bg-[#d0c6c9] blur-[1px]" />
    <div className="absolute left-[197px] top-[146px] w-[27px] h-[30px] bg-[#c5b4b9] blur-[1px]" />
  </section>
);

const StatusBar = () => (
  <footer className="relative h-[14px] flex items-stretch border-t border-[#c9c9c9] bg-[#f0f0f0] text-[#222]">
    <span className="flex-1 flex items-center pl-px">For Help, press F1</span>
    <span className="w-[75px] flex items-center pl-[3px] border-l border-[#b5b5b5]">Default</span>
    <span className="w-[56px] border-l border-[#b5b5b5]" />
    <span className="w-[42px] border-l border-[#b5b5b5]" />
    <span className="w-[41px] border-l border-[#b5b5b5]" />
    <span className="w-[40px] border-l border-[#b5b5b5]" />
    <span className="w-[40px] border-l border-[#b5b5b5]" />
    <span className="w-[35px] border-l border-[#b5b5b5]" />
    <span className="w-[64px] mr-2 flex items-center justify-center gap-[3px] border-2 border-[#e31313]">
      <svg viewBox="0 0 8 8" className="w-2 h-2" fill={GREEN} aria-hidden="true">
        <path d="M0 6h1.5v2H0zM2.2 4.5h1.5V8H2.200zM4.400 2.500h1.500V8H4.400zM6.500 0H8v8H6.500z" />
      </svg>
      50.8 / 0.0 Mb
    </span>
    <svg viewBox="0 0 20 56" className="absolute right-[34px] bottom-[14px] w-5 h-14" aria-hidden="true">
      <path d="M1 3l13 43" stroke="#e31313" strokeWidth="1.600" />
      <path d="M11 46l6-2.500 0 10z" fill="#e31313" />
    </svg>
  </footer>
);

const TitleBar = () => (
  <div className="relative h-[25px] bg-[#f3f3f3]">
    <div className="h-[13px] flex items-center justify-between pl-[56px] pr-[9px] text-[#8d8d8d]">
      <h1>ndedNext-Server - Hedge - FundedNext Ltd</h1>
      <div className="flex items-center gap-[19px]">
        {[
          ["Minimize", "M1 5h6"],
          ["Restore", "M1 3h4.500v4.500H1zM3 3V1h4.500v4.500h-2"],
          ["Close", "M1 1l6 6M7 1L1 7"],
        ].map(([label, d]) => (
          <button type="button" key={label} aria-label={label}>
            <svg viewBox="0 0 8 8" className="w-[7px] h-[7px]" fill="none" stroke="#999" strokeWidth="0.900" aria-hidden="true">
              <path d={d} />
            </svg>
          </button>
        ))}
      </div>
    </div>
    <nav className="h-3 flex items-center gap-[13px] pl-[57px] bg-[#efefef] text-[#222]">
      {["Insert", "Charts", "Tools", "Window", "Help"].map((item) => (
        <button type="button" key={item}>
          {item}
        </button>
      ))}
    </nav>
    <div className="absolute left-0 top-0 w-[55px] h-[25px] overflow-hidden">
      <div className="w-full h-full bg-linear-to-b from-[#eeb4b4] to-[#f2eded] blur-[2px]" />
    </div>
  </div>
);

export default function App() {
  return (
    <div className="relative h-screen min-h-[600px] flex flex-col overflow-hidden bg-[#f0f0f0] font-['Roboto',sans-serif] text-[7px] leading-[9px]">
      <TitleBar />
      <Toolbar />
      <main className="flex-1 min-h-0 flex pt-px pb-[2px]">
        <div className="w-[142px] flex flex-col gap-[5px]">
          <MarketWatch />
          <Navigator />
        </div>
        <div className="flex-1 min-w-0 flex flex-col ml-[3px]">
          <DataWindow />
          <div className="h-[15px] flex items-center justify-end gap-[14px] pr-[9px]">
            {[
              ["Minimize chart", "M1 7h6"],
              ["Maximize chart", "M1.5 1.5h5v5h-5z"],
              ["Close chart", "M1 1l6 6M7 1L1 7"],
            ].map(([label, d]) => (
              <button type="button" key={label} aria-label={label}>
                <svg viewBox="0 0 8 8" className="w-[7px] h-[7px]" fill="none" stroke="#b5b5b5" aria-hidden="true">
                  <path d={d} />
                </svg>
              </button>
            ))}
          </div>
          <Chart />
        </div>
      </main>
      <Toolbox />
      <StatusBar />
      <Specification />
      {/* pointer from the XAUUSD row to the sessions block */}
      <svg viewBox="0 0 104 22" className="absolute left-[45px] top-[176px] w-[104px] h-[22px]" aria-hidden="true">
        <path d="M1 2l95 15" stroke="#e31313" strokeWidth="1.4" />
        <path d="M103 18l-8 2 1-6z" fill="#e31313" />
      </svg>
    </div>
  );
}
